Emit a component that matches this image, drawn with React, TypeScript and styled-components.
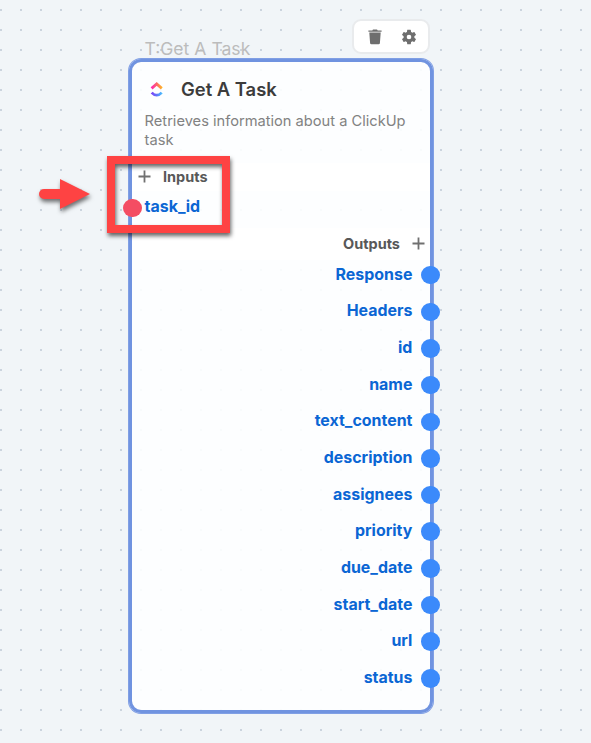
import React from 'react';
import styled, { createGlobalStyle } from 'styled-components';

const GlobalStyle = createGlobalStyle`
  * { box-sizing: border-box; }
  body { margin: 0; font-family: Inter, "Liberation Sans", sans-serif; }
`;

const Canvas = styled.main`
  position: relative;
  width: 591px;
  height: 743px;
  overflow: hidden;
  background-color: #f1f5f8;
  background-image: conic-gradient(from 270deg at 2px 2px, #cbd4de 90deg, transparent 0);
  background-size: 20px 20px;
  background-position: 0 9px;
`;

const Node = styled.section`
  position: absolute;
  left: 129px;
  top: 59px;
  width: 304px;
  height: 654px;
  border: 3px solid #7093e0;
  box-shadow: 0 0 0 1px #809fe4;
  border-radius: 12px;
  background: rgba(254, 255, 255, 0.89);
  background-clip: padding-box;
`;

const NodeTag = styled.div`
  position: absolute;
  left: 144.5px;
  top: 38px;
  font-size: 17.6px;
  line-height: 22px;
  color: #bcbcbc;
  white-space: nowrap;
`;

const Toolbar = styled.div`
  position: absolute;
  left: 352px;
  top: 19px;
  width: 78px;
  height: 35px;
  display: flex;
  align-items: center;
  justify-content: center;
  gap: 18px;
  padding-left: 3px;
  padding-top: 1px;
  border: 2px solid #e9ebed;
  border-radius: 9px;
  background: #fff;
`;

const Header = styled.header`
  display: flex;
  align-items: center;
  gap: 17px;
  height: 26px;
  margin: 14px 0 0 17px;
`;

const Title = styled.h1`
  margin: 0;
  font-size: 18.4px;
  line-height: 26px;
  font-weight: 600;
  color: #3c3c3c;
`;

const Description = styled.p`
  margin: 10px 0 0 12.6px;
  width: 275px;
  height: 51px;
  font-size: 14.65px;
  line-height: 19px;
  color: #828282;
`;

const GroupTitle = styled.div<{ $end?: boolean }>`
  display: flex;
  flex-direction: ${(p) => (p.$end ? 'row-reverse' : 'row')};
  align-items: center;
  gap: 12px;
  height: ${(p) => (p.$end ? 32 : 28)}px;
  padding: ${(p) => (p.$end ? '0 5px 0 0' : '0 0 1px 6px')};
  background: #fff;
  font-size: 14.5px;
  font-weight: 700;
  color: #585858;
`;

const Port = styled.div<{ $input?: boolean }>`
  display: flex;
  flex-direction: ${(p) => (p.$input ? 'row' : 'row-reverse')};
  align-items: center;
  gap: ${(p) => (p.$input ? 3 : 9)}px;
  height: 36.66px;
  padding-bottom: ${(p) => (p.$input ? 3 : 0)}px;
  margin: ${(p) => (p.$input ? '0 0 0 -9px' : '0 -10px 0 0')};
  font-size: 15.95px;
  font-weight: 700;
  color: #0b66d4;
`;

const PortLabel = styled.span`
  margin-top: -2px;
`;

const Dot = styled.span<{ $input?: boolean }>`
  flex: none;
  width: 18.6px;
  height: 18.6px;
  border-radius: 50%;
  background: ${(p) => (p.$input ? '#f44d63' : '#3b8afb')};
`;

const Outputs = styled.div`
  margin-top: -2.8px;
`;

const Highlight = styled.div`
  position: absolute;
  left: 107px;
  top: 156px;
  width: 123px;
  height: 77px;
  border: 8px solid #fe4343;
  filter: drop-shadow(1px 3px 2px rgba(0, 0, 0, 0.6));
`;

const Arrow = styled.svg`
  position: absolute;
  left: 36px;
  top: 176px;
  overflow: visible;
  filter: drop-shadow(1px 3px 2px rgba(0, 0, 0, 0.55));
`;

const outputs = [
  'Response', 'Headers', 'id', 'name', 'text_content', 'description',
  'assignees', 'priority', 'due_date', 'start_date', 'url', 'status',
];

const Plus = () => (
  <svg width="13" height="13" viewBox="0 0 13 13" fill="none" stroke="#707070" strokeWidth="1.8">
    <path d="M6.5 .5v12M.5 6.5h12" />
  </svg>
);

const TrashIcon = () => (
  <svg width="14" height="16" viewBox="0 0 14 16" fill="#6e6e6e">
    <path d="M.4 1.4h3.9L5 .5h4l.7.9h3.9v1.3H.4z" />
    <path d="M1.3 3.5h11.4l-.8 10.7a1.3 1.3 0 0 1-1.3 1.1H3.4a1.3 1.3 0 0 1-1.3-1.1z" />
  </svg>
);

const GearIcon = () => (
  <svg width="18" height="18" viewBox="0 0 24 24" fill="#6e6e6e">
    <path d="M19.14 12.94c.04-.3.06-.61.06-.94 0-.32-.02-.64-.07-.94l2.03-1.58a.49.49 0 0 0 .12-.61l-1.92-3.32a.488.488 0 0 0-.59-.22l-2.39.96c-.5-.38-1.03-.7-1.62-.94l-.36-2.54a.484.484 0 0 0-.48-.41h-3.84c-.24 0-.43.17-.47.41l-.36 2.54c-.59.24-1.13.57-1.62.94l-2.39-.96c-.22-.08-.47 0-.59.22L2.74 8.87c-.12.21-.08.47.12.61l2.03 1.58c-.05.3-.09.63-.09.94s.02.64.07.94l-2.03 1.58a.49.49 0 0 0-.12.61l1.92 3.32c.12.22.37.29.59.22l2.39-.96c.5.38 1.03.7 1.62.94l.36 2.54c.05.24.24.41.48.41h3.84c.24 0 .44-.17.47-.41l.36-2.54c.59-.24 1.13-.56 1.62-.94l2.39.96c.22.08.47 0 .59-.22l1.92-3.32c.12-.22.07-.47-.12-.61l-2.01-1.58zM12 15.1a3.1 3.1 0 1 1 0-6.2 3.1 3.1 0 0 1 0 6.2z" />
  </svg>
);

const ClickUpLogo = () => (
  <svg width="15" height="16" viewBox="0 0 15 16" fill="none" strokeWidth="2.8">
    <defs>
      <linearGradient id="roof" x1="1" x2="14" y1="0" y2="0" gradientUnits="userSpaceOnUse">
        <stop stopColor="#ff13c8" />
        <stop offset=".5" stopColor="#fb646c" />
        <stop offset="1" stopColor="#ffc41c" />
      </linearGradient>
      <linearGradient id="smile" x1="1" x2="14" y1="0" y2="0" gradientUnits="userSpaceOnUse">
        <stop stopColor="#8334f4" />
        <stop offset=".5" stopColor="#6271fa" />
        <stop offset="1" stopColor="#45ccfd" />
      </linearGradient>
    </defs>
    <path d="M2.6 7.4 7.7 2.9l5.1 4.5" stroke="url(#roof)" />
    <path d="M2.7 11.6q5 5.2 10 0" stroke="url(#smile)" />
  </svg>
);

export default function App() {
  return (
    <>
      <GlobalStyle />
      <Canvas>
        <NodeTag>T:Get A Task</NodeTag>
        <Toolbar>
          <TrashIcon />
          <GearIcon />
        </Toolbar>
        <Node>
          <Header>
            <ClickUpLogo />
            <Title>Get A Task</Title>
          </Header>
          <Description>Retrieves information about a ClickUp task</Description>
          <GroupTitle><Plus />Inputs</GroupTitle>
          <Port $input>
            <Dot $input />
            <PortLabel>task_id</PortLabel>
          </Port>
          <GroupTitle $end><Plus />Outputs</GroupTitle>
          <Outputs>
            {outputs.map((name) => (
              <Port key={name}>
                <Dot />
                <PortLabel>{name}</PortLabel>
              </Port>
            ))}
          </Outputs>
        </Node>
        <Highlight />
        <Arrow width="56" height="36" viewBox="0 0 56 36" fill="#fe4343">
          <path d="M24 13H8a5 5 0 0 0 0 10h16v10l30-15L24 3z" />
        </Arrow>
      </Canvas>
    </>
  );
}
